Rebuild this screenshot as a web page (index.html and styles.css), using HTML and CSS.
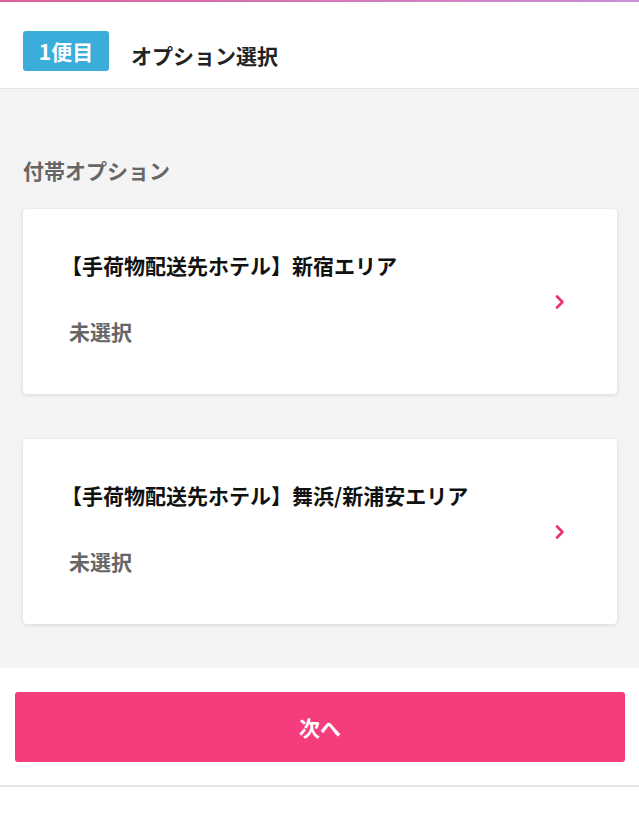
FILE: index.html
```html
<!DOCTYPE html>
<html lang="ja">
<head>
<meta charset="utf-8">
<link rel="stylesheet" href="styles.css">
</head>
<body>
<div class="page">
  <header class="header">
    <span class="badge">1便目</span>
    <h1 class="title">オプション選択</h1>
  </header>
  <main class="main">
    <h2 class="section">付帯オプション</h2>
    <div class="cards">
      <a class="card">
        <div class="card-body">
          <div class="card-title">【手荷物配送先ホテル】新宿エリア</div>
          <div class="card-status">未選択</div>
        </div>
        <svg class="chev" width="12" height="16" viewBox="0 0 12 16"><path d="M3 2.5 L8.5 8 L3 13.5" fill="none" stroke="#e8336f" stroke-width="2.6" stroke-linecap="round" stroke-linejoin="round"/></svg>
      </a>
      <a class="card">
        <div class="card-body">
          <div class="card-title">【手荷物配送先ホテル】舞浜/新浦安エリア</div>
          <div class="card-status">未選択</div>
        </div>
        <svg class="chev" width="12" height="16" viewBox="0 0 12 16"><path d="M3 2.5 L8.5 8 L3 13.5" fill="none" stroke="#e8336f" stroke-width="2.6" stroke-linecap="round" stroke-linejoin="round"/></svg>
      </a>
    </div>
  </main>
  <footer class="footer">
    <button class="next">次へ</button>
  </footer>
</div>
</body>
</html>
```
FILE: styles.css
```css
* { box-sizing: border-box; }
html, body { margin: 0; padding: 0; background: #fff; }
body {
  font-family: "Noto Sans CJK JP", "Noto Sans", sans-serif;
  width: 639px;
}
.page { display: flex; flex-direction: column; }
.header {
  height: 89px;
  border-bottom: 1px solid #e4e4e4;
  display: flex;
  align-items: center;
  padding: 14px 23px 0;
  gap: 22px;
  background: linear-gradient(90deg, #dd5f9a, #c990d8) top / 100% 2px no-repeat, #fff;
  box-shadow: 0 1px 2px rgba(0,0,0,0.04);
}
.badge {
  display: flex;
  align-items: center;
  justify-content: center;
  width: 86px;
  height: 40px;
  background: #3aaddb;
  color: #fff;
  border-radius: 3px;
  font-size: 21px;
  font-weight: 700;
}
.title {
  margin: 8px 0 0;
  font-size: 21px;
  font-weight: 700;
  color: #222;
}
.main {
  background: #f4f4f4;
  padding: 66px 22px 44px 23px;
}
.section {
  margin: 0 0 24px;
  font-size: 21px;
  font-weight: 700;
  color: #666;
  line-height: 30px;
}
.cards { display: flex; flex-direction: column; gap: 45px; }
.card {
  display: flex;
  align-items: center;
  justify-content: space-between;
  height: 185px;
  background: #fff;
  border-radius: 4px;
  box-shadow: 0 1px 4px rgba(0,0,0,0.12);
  padding: 0 46px 0 46px;
}
.card-body { display: flex; flex-direction: column; gap: 36px; margin-top: -7px; }
.card-title {
  font-size: 21px;
  font-weight: 700;
  color: #111;
  line-height: 30px;
  margin-left: -8px;
}
.card-status {
  font-size: 21px;
  font-weight: 700;
  color: #666;
  line-height: 30px;
}
.chev { margin-right: 5px; }
.footer {
  background: #fff;
  padding: 24px 14px 23px 15px;
  border-bottom: 2px solid #e6e6e6;
}
.next {
  display: block;
  width: 610px;
  height: 70px;
  border: none;
  border-radius: 3px;
  background: #f53d7e;
  color: #fff;
  font-family: inherit;
  font-size: 21px;
  font-weight: 700;
}
```
